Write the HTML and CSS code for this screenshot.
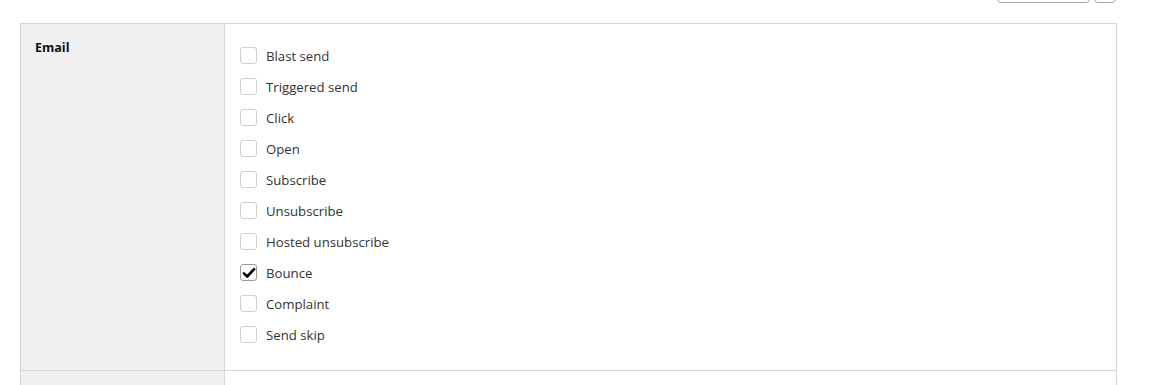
FILE: index.html
```html
<!DOCTYPE html>
<html lang="en">
<head>
    <meta charset="UTF-8">
    <title>Event settings</title>
    <link rel="stylesheet" href="styles.css">
</head>
<body>
    <div class="page">
        <div class="toolbar">
            <button class="tool-btn wide"></button>
            <button class="tool-btn small"></button>
        </div>
        <div class="settings-table">
            <div class="settings-row">
                <div class="row-label">Email</div>
                <div class="row-body">
                    <label class="check-row"><span class="box"></span>Blast send</label>
                    <label class="check-row"><span class="box"></span>Triggered send</label>
                    <label class="check-row"><span class="box"></span>Click</label>
                    <label class="check-row"><span class="box"></span>Open</label>
                    <label class="check-row"><span class="box"></span>Subscribe</label>
                    <label class="check-row"><span class="box"></span>Unsubscribe</label>
                    <label class="check-row"><span class="box"></span>Hosted unsubscribe</label>
                    <label class="check-row"><span class="box checked"><svg viewBox="0 0 16 16" width="14" height="14"><path d="M2.2 8.4 L6 12 L13.8 3.6" fill="none" stroke="#000" stroke-width="3" stroke-linecap="round" stroke-linejoin="round"/></svg></span>Bounce</label>
                    <label class="check-row"><span class="box"></span>Complaint</label>
                    <label class="check-row"><span class="box"></span>Send skip</label>
                </div>
            </div>
            <div class="settings-row">
                <div class="row-label"></div>
                <div class="row-body empty"></div>
            </div>
        </div>
    </div>
</body>
</html>
```

FILE: styles.css
```css
body {
    font-family: 'Open Sans', Arial, sans-serif;
    margin: 0;
    background: #fff;
    color: #333;
}
.page {
    padding: 0 53px 0 20px;
}
.toolbar {
    display: flex;
    justify-content: flex-end;
    align-items: flex-end;
    gap: 4px;
    height: 3px;
    overflow: hidden;
    padding-right: 1px;
    margin-bottom: 20px;
}
.tool-btn {
    height: 24px;
    border: 1px solid #a8a8a8;
    border-radius: 4px;
    background: #fff;
    flex-shrink: 0;
}
.wide {
    width: 93px;
}
.small {
    width: 22px;
}
.settings-table {
    border: 1px solid #d6d6d6;
    border-bottom: none;
}
.settings-row {
    display: flex;
    border-bottom: 1px solid #d6d6d6;
}
.row-label {
    width: 204px;
    flex-shrink: 0;
    background: #eff0ef;
    border-right: 1px solid #d6d6d6;
    padding: 15px 0 0 14px;
    box-sizing: border-box;
    font-size: 12.5px;
    font-weight: 700;
    color: #111;
}
.row-body {
    flex: 1;
    padding: 16px 0 20px 15px;
}
.row-body.empty {
    height: 40px;
    padding: 0;
}
.check-row {
    display: flex;
    align-items: center;
    gap: 9px;
    height: 31px;
    font-size: 13.2px;
    color: #333;
}
.box {
    width: 15px;
    height: 15px;
    border: 1px solid #cfcfcf;
    border-radius: 3px;
    display: flex;
    align-items: center;
    justify-content: center;
    background: #fff;
}
.box.checked {
    border-color: #9a9a9a;
}
```
